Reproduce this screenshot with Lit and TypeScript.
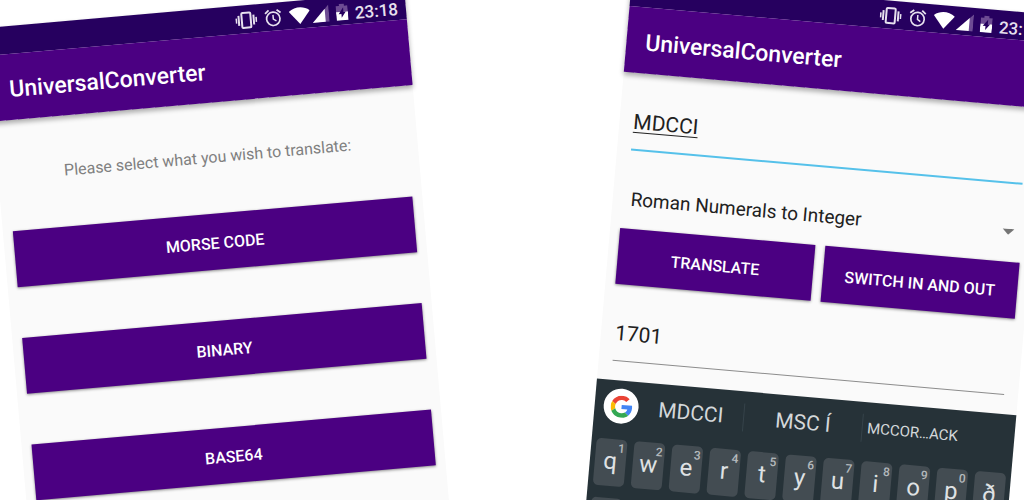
import { LitElement, html, css, svg } from "lit";
import { customElement, property, state } from "lit/decorators.js";

/** Android status bar plus the purple title bar shared by both screens. */
@customElement("app-header")
class AppHeader extends LitElement {
  @property() heading = "";
  @property() time = "";

  static styles = css`
    :host {
      display: block;
      position: relative;
      z-index: 1;
      color: #fff;
      box-shadow: 0 3px 5px rgba(0, 0, 0, 0.32);
    }
    .status {
      display: flex;
      align-items: center;
      justify-content: flex-end;
      box-sizing: border-box;
      height: 28px;
      padding: 2px 8px 0;
      background: #26005f;
      color: #e6e0ee;
      font-size: 17px;
      font-weight: 500;
    }
    .status svg {
      display: block;
      margin-right: 7px;
    }
    .status .wifi {
      margin-right: 2px;
    }
    .time {
      padding-top: 3px;
    }
    .title {
      display: flex;
      align-items: center;
      box-sizing: border-box;
      height: 66px;
      padding: 5px 19px 0;
      background: #4b0082;
    }
    h1 {
      margin: 0;
      font-size: 23px;
      line-height: 28px;
      font-weight: 500;
    }
  `;

  render() {
    return html`
      <div class="status">
        <svg width="22" height="18" viewBox="0 0 22 18" fill="none" stroke="#e6e0ee">
          <rect x="6.500" y="1.500" width="9" height="15" rx="1" stroke-width="2" />
          <path d="M3.500 4v10M18.500 4v10" stroke-width="2" />
          <path d="M1 6.500v5M21 6.500v5" stroke-width="1.600" />
        </svg>
        <svg width="18" height="18" viewBox="0 0 18 18" fill="none" stroke="#e6e0ee">
          <circle cx="9" cy="10" r="6.700" stroke-width="1.700" />
          <path d="M9 6v4.300l3 2" stroke-width="1.500" />
          <path d="M1.200 4.300L5 1.200M16.800 4.300L13 1.200" stroke-width="1.800" />
        </svg>
        <svg class="wifi" width="21" height="18" viewBox="0 0 21 18">
          <path d="M0 4.500C6-0.500 15-0.500 21 4.500L10.500 17.500z" fill="#fff" />
        </svg>
        <svg width="17" height="18" viewBox="0 0 17 18">
          <path d="M17 0.500V17.500H12V5.500z" fill="#6d4b93" />
          <path d="M13 4.500V17.500H0z" fill="#fff" />
        </svg>
        <svg width="12" height="18" viewBox="0 0 12 18">
          <path d="M3.500 1h5v2H12v6H0V3h3.500z" fill="#6d4b93" />
          <path d="M0 9h12v8.500H0z" fill="#fff" />
          <path d="M7.500 4.500L2.500 11h2.800v4L9.800 9H7.500z" fill="#26005f" />
        </svg>
        <span class="time">${this.time}</span>
      </div>
      <div class="title"><h1>${this.heading}</h1></div>
    `;
  }
}

/** Flat raised button in the brand purple. */
const buttonStyles = css`
  .action {
    display: block;
    width: 100%;
    height: 56px;
    margin: 0;
    padding: 2px 0 0;
    border: 0;
    background: #4b0082;
    color: #fff;
    font: 500 16px Roboto, sans-serif;
    text-transform: uppercase;
    box-shadow: 0 1px 3px rgba(0, 0, 0, 0.45);
  }
`;

@customElement("menu-screen")
class MenuScreen extends LitElement {
  static styles = [
    buttonStyles,
    css`
      :host {
        display: block;
      }
      .prompt {
        margin: 43px 0 44px;
        font-size: 16px;
        line-height: 24px;
        color: #808080;
        text-align: center;
      }
      .choices {
        display: grid;
        gap: 51px;
        padding: 0 10px;
      }
    `,
  ];

  private choices = ["Morse code", "Binary", "Base64"];

  render() {
    return html`
      <app-header heading="UniversalConverter" time="23:18"></app-header>
      <p class="prompt">Please select what you wish to translate:</p>
      <div class="choices">
        ${this.choices.map((c) => html`<button class="action">${c}</button>`)}
      </div>
    `;
  }
}

/** On-screen keyboard with its suggestion strip. */
@customElement("soft-keyboard")
class SoftKeyboard extends LitElement {
  static styles = css`
    :host {
      display: block;
      background: #263238;
      color: #d4d8da;
    }
    .suggestions {
      display: grid;
      grid-template-columns: 44px 106px 119px 100px 1fr;
      align-items: center;
      height: 51px;
    }
    .google {
      display: grid;
      place-items: center;
      width: 35px;
      height: 35px;
      margin-left: 9px;
      padding: 0;
      border: 0;
      border-radius: 50%;
      background: #fff;
    }
    .word {
      height: 28px;
      padding: 0;
      border: 0;
      border-right: 1px solid #36434a;
      background: none;
      color: inherit;
      font: 21px Roboto, sans-serif;
      white-space: nowrap;
    }
    .word.long {
      border: 0;
      font-size: 15px;
    }
    .keys {
      display: grid;
      grid-template-columns: repeat(11, 1fr);
      gap: 12px 7px;
      padding: 8px 5px;
    }
    .key {
      position: relative;
      height: 47px;
      padding: 0 0 4px;
      border: 0;
      border-radius: 5px;
      background: #434c52;
      color: #dfe1e3;
      font: 24px Roboto, sans-serif;
    }
    .hint {
      position: absolute;
      top: 2px;
      right: 2px;
      font-size: 12px;
      line-height: 14px;
      font-weight: 500;
      color: #b4b9bc;
    }
  `;

  private rows = ["qwertyuiopð", "asdfghjklæö"];

  render() {
    return html`
      <div class="suggestions">
        <button class="google" aria-label="Google">
          ${svg`<svg width="22" height="22" viewBox="0 0 48 48">
            <path fill="#EA4335" d="M24 9.500c3.540 0 6.710 1.220 9.210 3.600l6.850-6.850C35.900 2.380 30.470 0 24 0 14.620 0 6.510 5.380 2.560 13.220l7.980 6.190C12.430 13.720 17.740 9.500 24 9.500z"/>
            <path fill="#4285F4" d="M46.980 24.550c0-1.570-.15-3.090-.38-4.550H24v9.020h12.940c-.58 2.960-2.260 5.480-4.780 7.180l7.730 6c4.510-4.180 7.090-10.360 7.090-17.650z"/>
            <path fill="#FBBC05" d="M10.530 28.590c-.48-1.450-.76-2.990-.76-4.590s.27-3.140.76-4.590l-7.980-6.190C.92 16.460 0 20.120 0 24c0 3.880.92 7.540 2.560 10.780l7.970-6.190z"/>
            <path fill="#34A853" d="M24 48c6.480 0 11.930-2.130 15.890-5.810l-7.730-6c-2.150 1.450-4.920 2.300-8.160 2.300-6.260 0-11.570-4.220-13.470-9.910l-7.980 6.190C6.510 42.620 14.620 48 24 48z"/>
          </svg>`}
        </button>
        <button class="word">MDCCI</button>
        <button class="word">MSC Í</button>
        <button class="word long">MCCOR…ACK</button>
      </div>
      <div class="keys">
        ${this.rows.map((row, r) =>
          [...row].map(
            (letter, i) => html`<button class="key">
              ${letter}${r === 0 && i < 10
                ? html`<span class="hint">${(i + 1) % 10}</span>`
                : null}
            </button>`
          )
        )}
      </div>
    `;
  }
}

@customElement("converter-screen")
class ConverterScreen extends LitElement {
  @state() private source = "MDCCI";
  @state() private result = "1701";

  static styles = [
    buttonStyles,
    css`
      :host {
        display: block;
      }
      .form {
        padding: 24px 10px 19px;
      }
      .line {
        display: block;
        margin: 0 4px;
      }
      .field {
        display: block;
        box-sizing: border-box;
        width: 100%;
        margin: 0;
        padding: 13px 0 15px;
        border: 0;
        border-bottom: 1px solid #8c8c8c;
        border-radius: 0;
        outline: 0;
        background: none;
        color: #212121;
        font: 21px/24px Roboto, sans-serif;
        height: 53px;
      }
      .field.active {
        height: 54px;
        border-bottom: 2px solid #55c1ea;
        text-decoration: underline;
        text-decoration-thickness: 1px;
        text-underline-offset: 3px;
        text-decoration-skip-ink: none;
      }
      .picker {
        display: block;
        position: relative;
        margin: 28px 0 10px;
      }
      .picker select {
        display: block;
        appearance: none;
        width: 100%;
        height: 40px;
        padding: 0 30px 0 8px;
        border: 0;
        background: none;
        color: #212121;
        font: 19px Roboto, sans-serif;
      }
      .caret {
        position: absolute;
        right: 8px;
        top: 17px;
        pointer-events: none;
      }
      .actions {
        display: grid;
        grid-template-columns: 1fr 1fr;
        gap: 10px;
        margin-bottom: 24px;
      }
    `,
  ];

  render() {
    return html`
      <app-header heading="UniversalConverter" time="23:18"></app-header>
      <div class="form">
        <label class="line">
          <input class="field active" aria-label="Input" spellcheck="false" .value=${this.source} />
        </label>
        <label class="picker">
          <select aria-label="Conversion">
            <option>Roman Numerals to Integer</option>
          </select>
          <svg class="caret" width="12" height="6" viewBox="0 0 12 6">
            <path d="M0 0h12L6 6z" fill="#757575" />
          </svg>
        </label>
        <div class="actions">
          <button class="action">Translate</button>
          <button class="action">Switch in and out</button>
        </div>
        <label class="line">
          <input class="field" aria-label="Output" .value=${this.result} />
        </label>
      </div>
      <soft-keyboard></soft-keyboard>
    `;
  }
}

/** Two tilted phone screens on a white banner. */
@customElement("app-root")
class AppRoot extends LitElement {
  static styles = css`
    :host {
      display: block;
      height: 100vh;
      overflow: hidden;
      background: #fff;
      font-family: Roboto, sans-serif;
    }
    .stage {
      display: flex;
      align-items: flex-start;
      gap: 226px;
      margin-left: -15px;
    }
    .phone {
      flex: 0 0 421px;
      min-height: 600px;
      background: #fafafa;
      transform-origin: 0 0;
    }
    .left {
      margin-top: 28px;
      transform: rotate(-5deg);
    }
    .right {
      margin-top: -22px;
      transform: rotate(5deg);
    }
  `;

  render() {
    return html`
      <main class="stage">
        <menu-screen class="phone left"></menu-screen>
        <converter-screen class="phone right"></converter-screen>
      </main>
    `;
  }
}
